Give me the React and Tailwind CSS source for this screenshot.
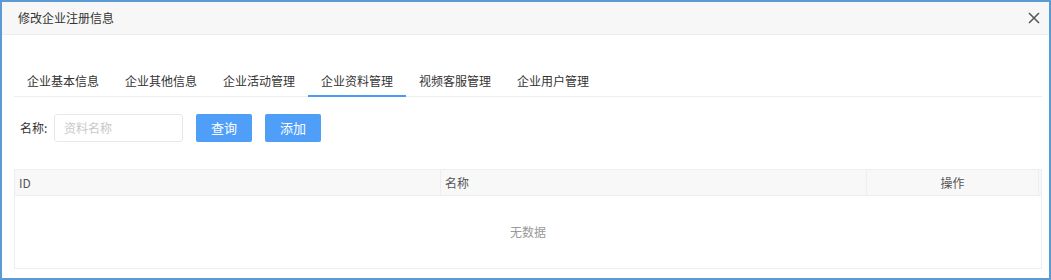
import React from "react";

const tabs = ["企业基本信息", "企业其他信息", "企业活动管理", "企业资料管理", "视频客服管理", "企业用户管理"];

export default function App() {
  const active = 3;

  return (
    <div
      className="w-[1051px] h-[280px] border-2 border-[#5b9bd5] bg-white flex flex-col text-[12px] text-[#333]"
      style={{ fontFamily: '"Noto Sans CJK SC", "Noto Sans", sans-serif' }}
    >
      {/* Header */}
      <div className="h-[33px] shrink-0 bg-[#f7f7f7] border-b border-[#ececec] flex items-center justify-between pl-4 pr-[9px]">
        <span className="text-[12px] text-[#333]">修改企业注册信息</span>
        <svg width="12" height="12" viewBox="0 0 12 12" className="text-[#555]">
          <path d="M1 1 L11 11 M11 1 L1 11" stroke="currentColor" strokeWidth="1.5" />
        </svg>
      </div>

      {/* Body */}
      <div className="flex-1 pl-3 pr-[7px] pt-[31px]">
        {/* Tabs */}
        <div className="flex border-b border-[#eee] h-[31px]">
          {tabs.map((t, i) => (
            <div
              key={t}
              className={
                "w-[98px] flex items-center justify-center -mb-px " +
                (i === active ? "border-b-2 border-[#4b9cf0]" : "border-b-2 border-transparent")
              }
            >
              {t}
            </div>
          ))}
        </div>

        {/* Search form */}
        <div className="flex items-center mt-[17px] h-[28px]">
          <span className="ml-[6px] w-[34px] text-[#333]">名称:</span>
          <div className="w-[129px] h-[28px] border border-[#e8e8e8] rounded-[3px] flex items-center pl-[9px] text-[#c8c8c8]">
            资料名称
          </div>
          <button className="ml-[13px] w-[56px] h-[28px] bg-[#4f9ef7] text-white rounded-[2px] text-[13px]">查询</button>
          <button className="ml-[13px] w-[56px] h-[28px] bg-[#4f9ef7] text-white rounded-[2px] text-[13px]">添加</button>
        </div>

        {/* Table */}
        <div className="mt-[27px] border border-[#eee] h-[100px] flex flex-col">
          <div className="h-[26px] flex bg-[#f8f8f8] border-b border-[#eee] text-[#555] pr-[2px]">
            <div className="w-[426px] flex items-center pl-[4px] border-r border-[#eee]">ID</div>
            <div className="w-[426px] flex items-center pl-[4px] border-r border-[#eee]">名称</div>
            <div className="flex-1 flex items-center justify-center border-r border-[#eee]">操作</div>
          </div>
          <div className="flex-1 flex items-center justify-center text-[#999]">无数据</div>
        </div>
      </div>
    </div>
  );
}
